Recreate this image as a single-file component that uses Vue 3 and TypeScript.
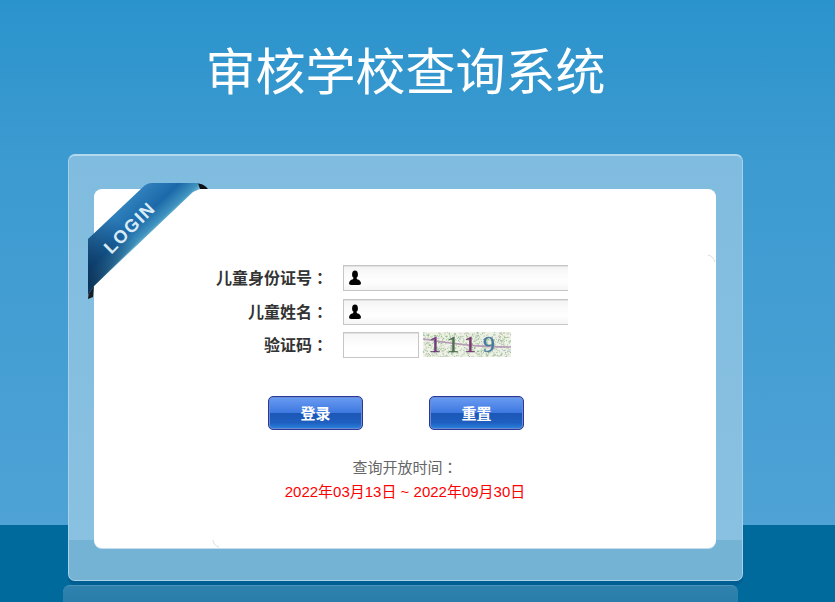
<script setup lang="ts">
interface Dot { x: number; y: number; c: string }
const colors = ['#8fb880', '#c4aec4', '#9cc294', '#c8d4a0', '#a8c0cc', '#7fae7a']
const dots: Dot[] = []
let seed = 17
const rnd = (): number => {
  seed = (seed * 7919 + 131) % 10007
  return seed / 10007
}
for (let i = 0; i < 620; i++) {
  dots.push({ x: rnd() * 88, y: rnd() * 25, c: colors[Math.floor(rnd() * colors.length)] })
}
const digits = [
  { t: '1', x: 12, c: '#6f3f78' },
  { t: '1', x: 30, c: '#4f6f52' },
  { t: '1', x: 47, c: '#733a6c' },
  { t: '9', x: 66, c: '#487a9c' },
]
const rows = [
  { label: '儿童身份证号', icon: true },
  { label: '儿童姓名', icon: true },
]
</script>

<template>
  <div class="page">
    <div class="stage">
      <h1 class="title">审核学校查询系统</h1>
      <div class="panel">
        <div class="panel-foot"></div>
        <div class="card">
          <form class="form" @submit.prevent>
            <div v-for="row in rows" :key="row.label" class="row">
              <label class="label">{{ row.label }}<span class="colon">：</span></label>
              <div class="field">
                <svg class="user" viewBox="0 0 12 16" width="12" height="16">
                  <ellipse cx="6" cy="4.4" rx="2.9" ry="3.8" fill="#000" />
                  <path d="M4.4 8 L7.6 8 L8 9.2 Q11.8 10 12 13.6 Q12 15 10 15 L2 15 Q0 15 0 13.6 Q0.2 10 4 9.2 Z" fill="#000" />
                </svg>
                <input class="input" type="text" />
              </div>
            </div>
            <div class="row row-code">
              <label class="label">验证码<span class="colon">：</span></label>
              <input class="input code" type="text" />
              <svg class="captcha" viewBox="0 0 88 25" width="88" height="25">
                <rect width="88" height="25" fill="#eef2e6" />
                <rect v-for="(d, i) in dots" :key="i" :x="d.x" :y="d.y" width="1" height="1" :fill="d.c" />
                <path d="M0 7 Q24 11 44 13 T88 15" stroke="#b79ab4" stroke-width="1.6" fill="none" />
                <g class="digits">
                  <text v-for="(d, i) in digits" :key="i" :x="d.x" y="20" :fill="d.c" :stroke="d.c">{{ d.t }}</text>
                </g>
              </svg>
            </div>
            <div class="actions">
              <button class="btn" type="submit">登录</button>
              <button class="btn" type="reset">重置</button>
            </div>
          </form>
          <p class="note">查询开放时间<span class="colon">：</span></p>
          <p class="dates">2022年03月13日 ~ 2022年09月30日</p>
          <svg class="nick nick-a" viewBox="0 0 8 10" width="8" height="10">
            <path d="M0 1 Q5 2 7 8" stroke="#dcdcdc" stroke-width="1" fill="none" />
          </svg>
          <svg class="nick nick-b" viewBox="0 0 8 8" width="8" height="8">
            <path d="M1 0 Q1 5 7 7" stroke="#d8dfe4" stroke-width="1" fill="none" />
          </svg>
        </div>
        <svg class="ribbon" viewBox="0 0 124 118" width="124" height="118">
          <defs>
            <linearGradient id="band" gradientUnits="userSpaceOnUse" x1="30" y1="28" x2="60" y2="60">
              <stop offset="0" stop-color="#2f80bd" />
              <stop offset="0.5" stop-color="#1c69a9" />
              <stop offset="0.8" stop-color="#3f93bf" />
              <stop offset="1" stop-color="#a8dcea" />
            </linearGradient>
            <linearGradient id="shade" gradientUnits="userSpaceOnUse" x1="0" y1="100" x2="46" y2="54">
              <stop offset="0" stop-color="#06294e" stop-opacity="0.9" />
              <stop offset="1" stop-color="#06294e" stop-opacity="0" />
            </linearGradient>
          </defs>
          <path d="M106 0 Q116 0 120 6 L110 6 L104 8 Z" fill="#0c0f14" />
          <path d="M0 116 Q0 108 6 102 L5 114 Z" fill="#1a1c20" />
          <path d="M0 56 L55 4 Q59 0 64 0 L110 0 L112 6 L105 9 L6 103 L0 112 Z" fill="url(#band)" />
          <path d="M0 56 L28 30 L80 30 L6 103 L0 112 Z" fill="url(#shade)" />
          <text class="ribbon-text" x="46" y="49" transform="rotate(-45 46 49)" text-anchor="middle">LOGIN</text>
        </svg>
      </div>
      <div class="reflection"></div>
    </div>
  </div>
</template>

<style>
html,
body {
  margin: 0;
  padding: 0;
}
</style>

<style scoped>
.page {
  width: 835px;
  height: 602px;
  overflow: hidden;
  background: linear-gradient(to bottom, #2b93cc 0, #3b9ad0 150px, #4ea2d5 525px, #006a9c 525px, #006a9c 602px);
  font-family: "Liberation Sans", "Noto Sans CJK SC", sans-serif;
}
.stage {
  position: relative;
  width: 675px;
  margin-left: 68px;
}
.title {
  margin: 0;
  height: 154px;
  padding-top: 38px;
  box-sizing: border-box;
  font-family: "Noto Sans CJK SC", sans-serif;
  font-size: 50px;
  font-weight: 400;
  line-height: 60px;
  color: #fff;
  text-align: center;
}
.panel {
  position: relative;
  box-sizing: border-box;
  height: 427px;
  padding: 33px 26px 32px 25px;
  border: 1px solid #a9d2e9;
  border-top: 2px solid #b4d9ee;
  border-radius: 7px;
  background: linear-gradient(to bottom, #80bcdf, #8ac1e1);
  box-shadow: 0 4px 0 #005e92;
  z-index: 1;
}
.panel-foot {
  position: absolute;
  left: 0;
  right: 0;
  bottom: 0;
  height: 40px;
  background: #74b3d4;
  border-radius: 0 0 6px 6px;
}
.card {
  position: relative;
  box-sizing: border-box;
  height: 359px;
  padding: 76px 0 0 122px;
  background: #fff;
  border-radius: 8px;
  box-shadow: 0 1px 0 #c3deee;
}
.form {
  display: flex;
  flex-direction: column;
  gap: 8px;
}
.row {
  display: flex;
  align-items: center;
  height: 26px;
}
.row-code {
  margin-top: -1px;
}
.label {
  flex: none;
  width: 112px;
  margin-right: 15px;
  padding-bottom: 2px;
  font-size: 16px;
  font-weight: 700;
  color: #333;
  text-align: right;
  white-space: nowrap;
  font-family: "Noto Sans CJK SC", sans-serif;
}
.colon {
  font-family: "Noto Sans CJK TC", sans-serif;
}
.field {
  position: relative;
  display: flex;
}
.user {
  position: absolute;
  left: 6px;
  top: 5px;
}
.input {
  display: block;
  box-sizing: border-box;
  width: 225px;
  height: 26px;
  margin: 0;
  padding: 0 0 0 28px;
  border: 1px solid #c6c6c6;
  border-right: 0;
  box-shadow: inset 0 1px 0 #e2e2e2;
  background: linear-gradient(to bottom, #f3f3f3, #fbfbfb 35%, #fefefe 65%, #f5f5f5);
  outline: none;
}
.code {
  width: 76px;
  padding: 0 4px;
  border-right: 1px solid #c6c6c6;
  background: linear-gradient(to bottom, #f5f5f5, #fff 60%);
}
.captcha {
  margin-left: 4px;
  margin-top: -2px;
  filter: blur(0.4px);
}
.digits {
  font-family: "Liberation Serif", serif;
  font-size: 24px;
  stroke-width: 0.4px;
  text-anchor: middle;
}
.actions {
  display: flex;
  gap: 66px;
  margin: 30px 0 0 52px;
}
.btn {
  box-sizing: border-box;
  width: 95px;
  height: 34px;
  padding: 0 0 2px;
  border: 1px solid #27399a;
  border-radius: 5px;
  background: linear-gradient(to bottom, #6a9cf2 0, #3d78e0 50%, #1c57b6 51%, #1e5fc0 80%, #2b84e0 100%);
  box-shadow: inset 0 0 0 1px #6f8bcf;
  color: #fff;
  font-family: "Noto Sans CJK SC", sans-serif;
  font-size: 15px;
  font-weight: 700;
  cursor: pointer;
}
.note,
.dates {
  margin: 0 0 0 -122px;
  font-size: 15px;
  line-height: 24px;
  text-align: center;
}
.note {
  margin-top: 25px;
  color: #666;
}
.dates {
  color: #f00;
}
.nick {
  position: absolute;
}
.nick-a {
  right: 0;
  top: 65px;
}
.nick-b {
  left: 118px;
  bottom: 0;
}
.ribbon {
  position: absolute;
  left: 19px;
  top: 27px;
  overflow: visible;
}
.ribbon-text {
  font-family: "Liberation Sans", sans-serif;
  font-size: 18px;
  font-weight: 700;
  letter-spacing: 1.5px;
  fill: #d9ecf4;
}
.reflection {
  position: absolute;
  left: -5px;
  top: 585px;
  width: 675px;
  height: 40px;
  border-top: 1px solid #4d93b9;
  border-radius: 7px 7px 0 0;
  background: linear-gradient(to bottom, #2f82ad, #1f77a6);
}
</style>
